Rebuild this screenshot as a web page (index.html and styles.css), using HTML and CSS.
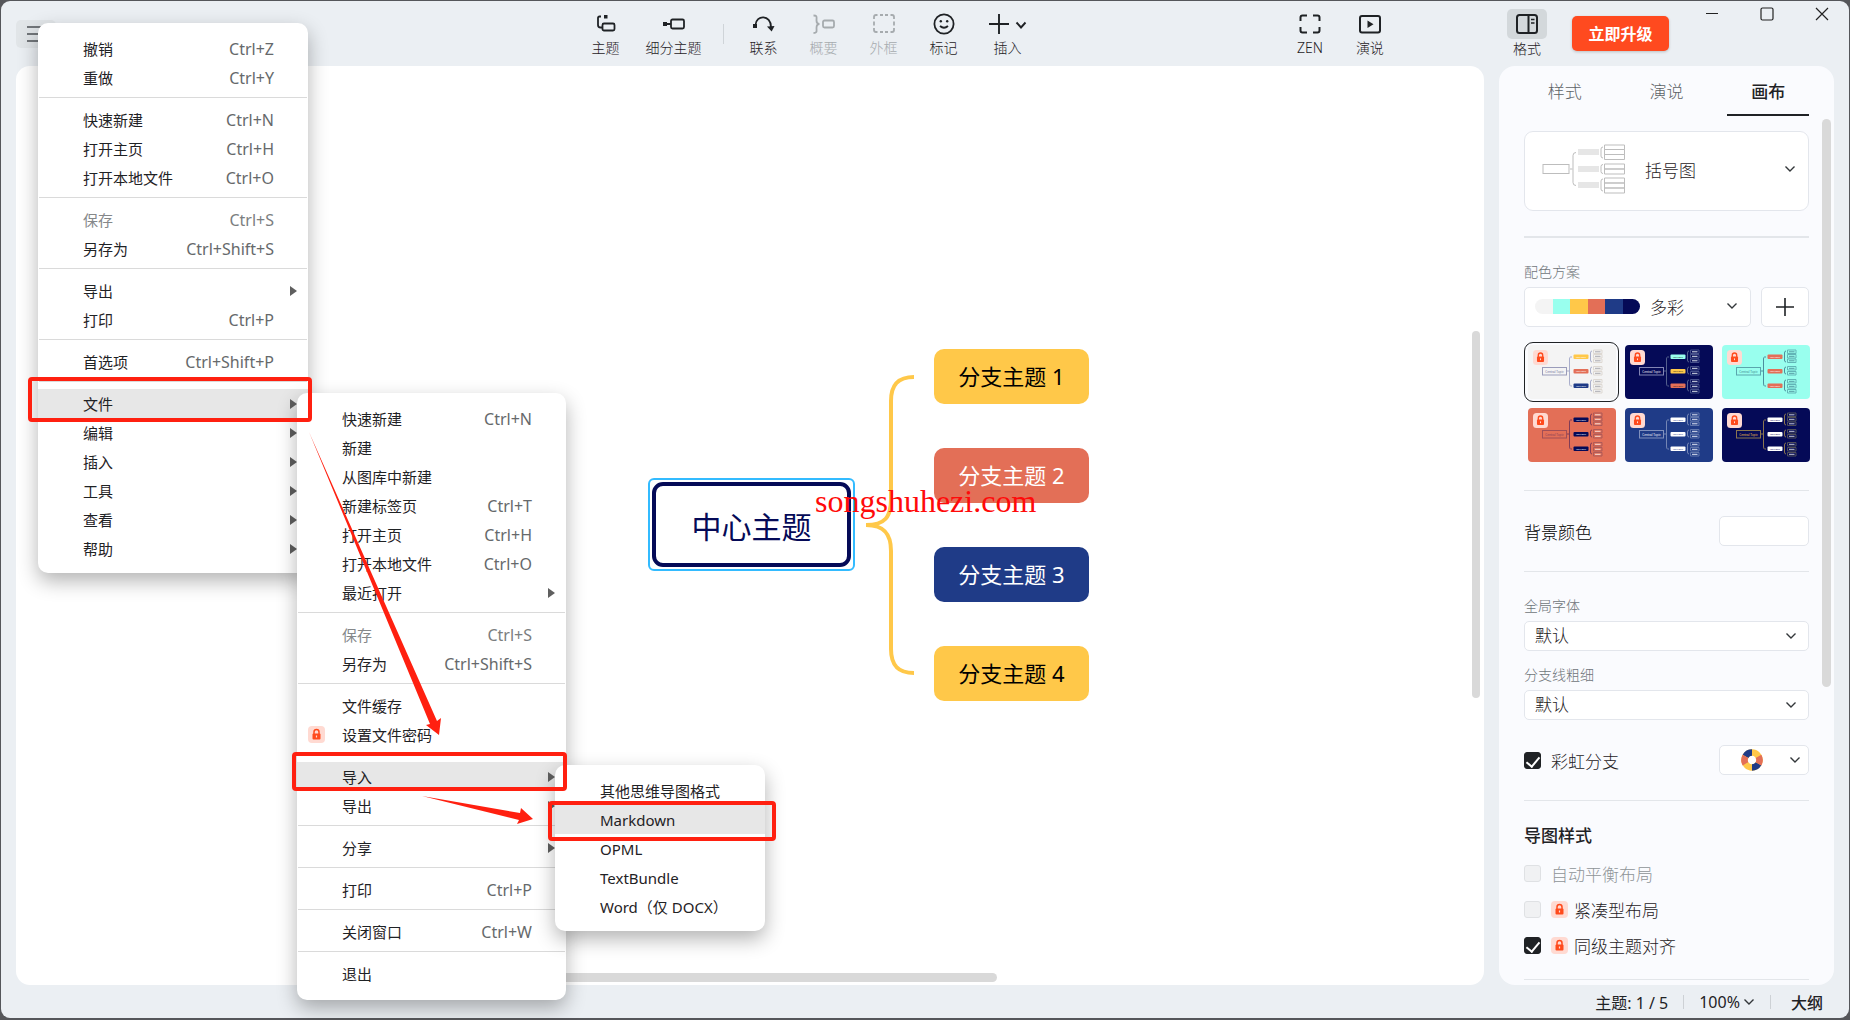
FILE: index.html
```html
<!DOCTYPE html>
<html lang="zh-CN">
<head>
<meta charset="utf-8">
<title>思维导图</title>
<link rel="stylesheet" href="styles.css">
</head>
<body>
<svg class="defs" aria-hidden="true">
  <symbol id="lock" viewBox="0 0 17 17">
    <rect width="17" height="17" rx="4" fill="#ffdad2"/>
    <path d="M6 8V5.900a2.500 2.500 0 0 1 5 0V8" fill="none" stroke="#ff4a1c" stroke-width="1.500"/>
    <rect x="4.500" y="7.500" width="8" height="6" rx="1" fill="#ff4a1c"/>
    <path d="M8.500 9.500v2" stroke="#ffdad2" stroke-width="1.200"/>
  </symbol>
  <symbol id="chevron" viewBox="0 0 12 8">
    <path d="M1.500 1.500 6 6l4.500-4.500" fill="none" stroke="currentColor" stroke-width="1.400"/>
  </symbol>
  <symbol id="tree" viewBox="0 0 88 54">
    <rect class="t-bg" width="88" height="54" rx="4"/>
    <rect class="t-center" x="14.500" y="22.500" width="24" height="7.500"/>
    <path class="t-line" d="M39 26h3M44 12h-1.500q-1 0-1 2v24q0 3 1 3H44M64 6q-1.500 0-1.500 2v7q0 2 1.500 2M64 22q-1.500 0-1.500 2v3q0 2 1.500 2M64 35q-1.500 0-1.500 2v7q0 2 1.500 2"/>
    <rect class="t-m1" x="45.500" y="9.500" width="15" height="4.500" rx="1"/>
    <rect class="t-m2" x="45.500" y="24" width="15" height="4.500" rx="1"/>
    <rect class="t-m3" x="45.500" y="38.500" width="15" height="4.500" rx="1"/>
    <path class="t-sub" d="M65.500 5h8.500v3.500h-8.500zM65.500 9.500h8.500v3.500h-8.500zM65.500 14h8.500v3.500h-8.500zM65.500 21.500h8.500v3.500h-8.500zM65.500 26.500h8.500v3.500h-8.500zM65.500 34.500h8.500v3.500h-8.500zM65.500 39.500h8.500v3.500h-8.500zM65.500 44.500h8.500v3.500h-8.500z"/>
    <path class="t-subtext" d="M67 6.800h5.500M67 11.300h5.500M67 15.800h5.500M67 23.300h5.500M67 28.300h5.500M67 36.300h5.500M67 41.300h5.500M67 46.300h5.500"/>
    <text class="t-ctext" x="26.500" y="27.500">Central Topic</text>
    <text class="t-mtext" x="53" y="12.800">Main Topic</text>
    <text class="t-mtext" x="53" y="27.300">Main Topic</text>
    <text class="t-mtext" x="53" y="41.800">Main Topic</text>
  </symbol>
</svg>

<div class="window">
  <header class="toolbar">
    <button class="hamburger" aria-label="菜单">
      <svg width="18" height="16" viewBox="0 0 18 16"><path d="M0 1h18M0 8h18M0 15h18" stroke="#4d5256" stroke-width="1.600"/></svg>
    </button>
    <span class="space-a"></span>
    <button class="tool">
      <svg width="22" height="22" viewBox="0 0 22 22" fill="none" stroke="#1f2225" stroke-width="1.800"><path d="M6 3.500H4.500q-1.500 0-1.500 1.500v7q0 2.500 2.500 2.500H7"/><rect x="7.500" y="10.500" width="12" height="7" rx="1.500"/><rect x="9" y="2" width="3.500" height="3.500" fill="#1f2225" stroke="none"/></svg>
      主题</button>
    <button class="tool wide">
      <svg width="24" height="22" viewBox="0 0 24 22" fill="none" stroke="#1f2225" stroke-width="1.800"><rect x="9" y="6.500" width="13" height="9" rx="1.500"/><path d="M3 11h6"/><rect x="1" y="9" width="4" height="4" fill="#1f2225" stroke="none"/></svg>
      细分主题</button>
    <span class="tool-sep"></span>
    <button class="tool">
      <svg width="22" height="22" viewBox="0 0 22 22" fill="none" stroke="#1f2225" stroke-width="1.800"><path d="M2.500 12C3 1.500 18 1.500 18 14"/><rect x="0" y="11" width="4" height="4" fill="#1f2225" stroke="none"/><path d="M14 13.500l7.500-.500-2.800 5.500z" fill="#1f2225" stroke="none"/></svg>
      联系</button>
    <button class="tool" disabled>
      <svg width="24" height="22" viewBox="0 0 24 22" fill="none" stroke="#a6abae" stroke-width="1.800"><path d="M1.500 2.500c4 0 3 1.500 3 5 0 2 .5 3.500 3 3.500-2.500 0-3 1.500-3 4 0 3 1 5-3 5"/><rect x="11" y="7.500" width="11" height="7" rx="1.500"/></svg>
      概要</button>
    <button class="tool" disabled>
      <svg width="22" height="22" viewBox="0 0 22 22" fill="none" stroke="#a6abae" stroke-width="1.800"><path d="M1 6V4q0-2 2-2h1.500M17.500 2H19q2 0 2 2v2M21 15v2q0 2-2 2h-1.500M4.500 19H3q-2 0-2-2v-2M7 2h3M12 2h3M7 19h3M12 19h3M1 8.500v4M21 8.500v4"/></svg>
      外框</button>
    <button class="tool">
      <svg width="22" height="22" viewBox="0 0 22 22" fill="none" stroke="#1f2225" stroke-width="1.800"><circle cx="11" cy="11" r="9.600"/><path d="M7 13q4 3.500 8 0"/><circle cx="7.800" cy="8.300" r="1.200" fill="#1f2225" stroke="none"/><circle cx="14.200" cy="8.300" r="1.200" fill="#1f2225" stroke="none"/></svg>
      标记</button>
    <button class="tool insert">
      <svg width="38" height="22" viewBox="0 0 38 22" fill="none" stroke="#1f2225" stroke-width="1.900"><path d="M0 11h20M10 1v20M27.500 9.500l4.500 5 4.500-5"/></svg>
      插入</button>
    <span class="space-b"></span>
    <button class="tool">
      <svg width="22" height="22" viewBox="0 0 22 22" fill="none" stroke="#1f2225" stroke-width="2"><path d="M1.500 8V4.500q0-2 2-2H8M14 2.500h4.500q2 0 2 2V8M20.500 14v3.500q0 2-2 2H14M8 19.500H3.500q-2 0-2-2V14"/></svg>
      ZEN</button>
    <button class="tool">
      <svg width="22" height="22" viewBox="0 0 22 22" fill="none" stroke="#1f2225" stroke-width="2"><rect x="1" y="3" width="20" height="16.500" rx="2"/><path d="M8.500 7.500v7.500l6-3.750z" fill="#1f2225" stroke="none"/></svg>
      演说</button>
    <span class="space-c"></span>
    <button class="tool format">
      <span class="format-icon"><svg width="22" height="22" viewBox="0 0 22 22" fill="none" stroke="#1f2225" stroke-width="2"><rect x="1" y="2" width="20" height="18" rx="2.500"/><path d="M12.500 2v18"/><path d="M15 6.500h3.500M15 10h3.500" stroke-width="1.300"/></svg></span>
      格式</button>
    <button class="upgrade">立即升级</button>
    <div class="controls">
      <button aria-label="最小化"><svg width="14" height="14" viewBox="0 0 14 14" fill="none" stroke="#222"><path d="M1 6.500h12"/></svg></button>
      <button aria-label="最大化"><svg width="14" height="14" viewBox="0 0 14 14" fill="none" stroke="#222" stroke-width="1.200"><rect x="1" y="1" width="12" height="12" rx="1.500"/></svg></button>
      <button aria-label="关闭"><svg width="14" height="14" viewBox="0 0 14 14" fill="none" stroke="#222" stroke-width="1.200"><path d="M1 1l12 12M13 1L1 13"/></svg></button>
    </div>
  </header>

  <div class="main">
    <main class="canvas">
      <svg class="bracket" width="52" height="304" viewBox="0 0 52 304"><path d="M50 4C34 4 27 12 27 28V126C27 144 21 152 2 152C21 152 27 162 27 178V276C27 292 34 300 50 300" fill="none" stroke="#ffc849" stroke-width="4"/></svg>
      <div class="central"><span>中心主题</span></div>
      <div class="branch b1">分支主题 1</div>
      <div class="branch b2">分支主题 2</div>
      <div class="branch b3">分支主题 3</div>
      <div class="branch b4">分支主题 4</div>
      <div class="watermark">songshuhezi.com</div>
      <span class="bar-v"></span>
      <span class="bar-h"></span>
    </main>

    <aside class="sidebar">
      <nav class="tabs">
        <button>样式</button><button>演说</button><button class="on">画布</button>
      </nav>
      <button class="field structure">
        <svg width="84" height="50" viewBox="0 0 84 50" fill="none"><rect x="1" y="20.500" width="26" height="9" stroke="#bdbdbd"/><path d="M28 25h2.500M34 8.500q-3 0-3 3v27q0 3 3 3" stroke="#bdbdbd"/><path d="M36 5h21v6H36zM36 22h21v6H36zM36 38h21v6H36z" fill="#e6e6e6"/><path d="M61 3q-2 0-2 2v7q0 2 2 2M61 20.500q-2 0-2 2v5q0 2 2 2M61 35q-2 0-2 2v8q0 2 2 2" stroke="#bdbdbd"/><path d="M62.500 1h20v4.500h-20zM62.500 5.500h20v5h-20zM62.500 10.500h20v5h-20zM62.500 20h20v5h-20zM62.500 25h20v5h-20zM62.500 34h20v5h-20zM62.500 39h20v5h-20zM62.500 44h20v5h-20z" stroke="#bdbdbd"/></svg>
        <span class="grow">括号图</span>
        <svg class="chev"><use href="#chevron"/></svg>
      </button>
      <hr class="thick">
      <div class="caption">配色方案</div>
      <div class="scheme">
        <button class="field palette">
          <span class="swatch"><i class="c1"></i><i class="c2"></i><i class="c3"></i><i class="c4"></i><i class="c5"></i><i class="c6"></i></span>
          <span class="grow">多彩</span>
          <svg class="chev"><use href="#chevron"/></svg>
        </button>
        <button class="field plus" aria-label="添加"><svg width="18" height="18" viewBox="0 0 18 18"><path d="M0 9h18M9 0v18" stroke="#1f2225" stroke-width="1.600"/></svg></button>
      </div>
      <div class="themes">
        <button class="theme th1 selected" aria-label="配色 1"><svg class="tree"><use href="#tree"/></svg><svg class="lock"><use href="#lock"/></svg></button>
        <button class="theme th2" aria-label="配色 2"><svg class="tree"><use href="#tree"/></svg><svg class="lock"><use href="#lock"/></svg></button>
        <button class="theme th3" aria-label="配色 3"><svg class="tree"><use href="#tree"/></svg><svg class="lock"><use href="#lock"/></svg></button>
        <button class="theme th4" aria-label="配色 4"><svg class="tree"><use href="#tree"/></svg><svg class="lock"><use href="#lock"/></svg></button>
        <button class="theme th5" aria-label="配色 5"><svg class="tree"><use href="#tree"/></svg><svg class="lock"><use href="#lock"/></svg></button>
        <button class="theme th6" aria-label="配色 6"><svg class="tree"><use href="#tree"/></svg><svg class="lock"><use href="#lock"/></svg></button>
      </div>
      <hr>
      <div class="row"><span class="black">背景颜色</span><button class="field small" aria-label="背景颜色"></button></div>
      <hr>
      <label class="caption" for="font">全局字体</label>
      <div class="select"><select id="font" class="field"><option>默认</option></select><svg class="chev"><use href="#chevron"/></svg></div>
      <label class="caption second" for="line">分支线粗细</label>
      <div class="select"><select id="line" class="field"><option>默认</option></select><svg class="chev"><use href="#chevron"/></svg></div>
      <div class="row">
        <label class="check"><input type="checkbox" checked>彩虹分支</label>
        <button class="field small rainbow" aria-label="彩虹配色">
          <svg width="22" height="22" viewBox="0 0 22 22" fill="none" stroke-width="6.500"><circle cx="11" cy="11" r="7.500" stroke="#ffc849"/><path d="M11 3.500A7.500 7.500 0 0 0 4.500 7.250M11 18.500A7.500 7.500 0 0 0 17.500 14.750" stroke="#1f3b87"/><path d="M4.500 7.250A7.500 7.500 0 0 0 4.500 14.750M17.500 14.750A7.500 7.500 0 0 0 17.500 7.250" stroke="#e36f57"/></svg>
          <svg class="chev"><use href="#chevron"/></svg>
        </button>
      </div>
      <hr>
      <h2>导图样式</h2>
      <label class="check line off"><input type="checkbox" disabled>自动平衡布局</label>
      <label class="check line"><input type="checkbox"><svg class="badge"><use href="#lock"/></svg>紧凑型布局</label>
      <label class="check line"><input type="checkbox" checked><svg class="badge"><use href="#lock"/></svg>同级主题对齐</label>
      <hr class="end">
      <span class="bar-side"></span>
    </aside>
  </div>

  <footer class="status">
    <span>主题: 1 / 5</span><i></i><button>100%<svg class="chev"><use href="#chevron"/></svg></button><i></i><button class="outline">大纲</button>
  </footer>
</div>

<ul class="menu menu-main">
  <li><button>撤销<kbd>Ctrl+Z</kbd></button></li>
  <li><button>重做<kbd>Ctrl+Y</kbd></button></li>
  <li class="sep"></li>
  <li><button>快速新建<kbd>Ctrl+N</kbd></button></li>
  <li><button>打开主页<kbd>Ctrl+H</kbd></button></li>
  <li><button>打开本地文件<kbd>Ctrl+O</kbd></button></li>
  <li class="sep"></li>
  <li><button disabled>保存<kbd>Ctrl+S</kbd></button></li>
  <li><button>另存为<kbd>Ctrl+Shift+S</kbd></button></li>
  <li class="sep"></li>
  <li><button class="sub">导出</button></li>
  <li><button>打印<kbd>Ctrl+P</kbd></button></li>
  <li class="sep"></li>
  <li><button>首选项<kbd>Ctrl+Shift+P</kbd></button></li>
  <li class="sep"></li>
  <li><button class="sub hot">文件</button></li>
  <li><button class="sub">编辑</button></li>
  <li><button class="sub">插入</button></li>
  <li><button class="sub">工具</button></li>
  <li><button class="sub">查看</button></li>
  <li><button class="sub">帮助</button></li>
</ul>

<ul class="menu menu-file">
  <li><button>快速新建<kbd>Ctrl+N</kbd></button></li>
  <li><button>新建</button></li>
  <li><button>从图库中新建</button></li>
  <li><button>新建标签页<kbd>Ctrl+T</kbd></button></li>
  <li><button>打开主页<kbd>Ctrl+H</kbd></button></li>
  <li><button>打开本地文件<kbd>Ctrl+O</kbd></button></li>
  <li><button class="sub">最近打开</button></li>
  <li class="sep"></li>
  <li><button disabled>保存<kbd>Ctrl+S</kbd></button></li>
  <li><button>另存为<kbd>Ctrl+Shift+S</kbd></button></li>
  <li class="sep"></li>
  <li><button>文件缓存</button></li>
  <li><button class="locked"><svg class="badge"><use href="#lock"/></svg>设置文件密码</button></li>
  <li class="sep"></li>
  <li><button class="sub hot">导入</button></li>
  <li><button class="sub">导出</button></li>
  <li class="sep"></li>
  <li><button class="sub">分享</button></li>
  <li class="sep"></li>
  <li><button>打印<kbd>Ctrl+P</kbd></button></li>
  <li class="sep"></li>
  <li><button>关闭窗口<kbd>Ctrl+W</kbd></button></li>
  <li class="sep"></li>
  <li><button>退出</button></li>
</ul>

<ul class="menu menu-import">
  <li><button>其他思维导图格式</button></li>
  <li><button class="hot">Markdown</button></li>
  <li><button>OPML</button></li>
  <li><button>TextBundle</button></li>
  <li><button>Word（仅 DOCX）</button></li>
</ul>

<span class="mark mark-file"></span>
<span class="mark mark-import"></span>
<span class="mark mark-markdown"></span>
<svg class="arrows" width="560" height="840" viewBox="0 0 560 840" fill="#ff2010">
  <path d="M309 432L437 721L441 718L439 735L426 725L430 724Z"/>
  <path d="M422 796L520 813L521 808L533 819L517 824L519 820Z"/>
</svg>
</body>
</html>
```
FILE: styles.css
```css
* { box-sizing: border-box; }
html, body { height: 100%; }
body {
  margin: 0;
  padding: 1px 1px 2px;
  background: #55565a;
  color: #1f2225;
  font-family: "Noto Sans", "Noto Sans CJK SC", sans-serif;
  font-size: 17px;
  overflow: hidden;
}
button, select, input { font: inherit; color: inherit; }
button { border: 0; padding: 0; background: none; }
svg { flex: none; }
.defs { position: absolute; width: 0; height: 0; }

.window {
  display: flex;
  flex-direction: column;
  height: 100%;
  background: #ebeff3;
  border-radius: 9px;
  overflow: hidden;
}

/* toolbar */
.toolbar { display: flex; height: 65px; padding-left: 15px; flex: none; }
.hamburger {
  width: 40px;
  height: 28px;
  margin-top: 19px;
  border-radius: 5px;
  background: #e1e5e8;
  display: flex;
  align-items: center;
  justify-content: center;
}
.space-a { flex: 519 0 0; }
.space-b { flex: 238 0 0; }
.space-c { flex: 107 0 0; }
.tool {
  width: 60px;
  padding-top: 12px;
  display: flex;
  flex-direction: column;
  align-items: center;
  gap: 3px;
  font-size: 14px;
  font-weight: 300;
  line-height: 20px;
}
.tool:disabled { color: #a6abae; }
.tool.wide { width: 76px; }
.tool.insert { width: 68px; }
.tool-sep { width: 1px; height: 20px; margin: 23px 10px 0 11px; background: #cfd4d8; }
.tool.format { width: 40px; padding-top: 8px; gap: 0; }
.format-icon {
  display: flex;
  align-items: center;
  justify-content: center;
  width: 40px;
  height: 30px;
  border-radius: 5px;
  background: #d3d8db;
}
.upgrade {
  width: 97px;
  height: 35px;
  margin: 15px 15px 0 25px;
  padding-bottom: 2px;
  border-radius: 5px;
  background: #ff4a1f;
  color: #fff;
  font-size: 16px;
  font-weight: 700;
  box-shadow: 0 1px 3px rgba(0, 0, 0, .2);
}
.controls { display: flex; }
.controls button { width: 55px; height: 26px; display: flex; align-items: center; justify-content: center; }

/* body */
.main { flex: 1; min-height: 0; display: flex; gap: 15px; padding: 0 15px; }
.canvas { position: relative; flex: 1; background: #fff; border-radius: 14px; overflow: hidden; }
.central {
  position: absolute;
  left: 632px;
  top: 412px;
  width: 207px;
  height: 93px;
  padding: 2px;
  border: 2px solid #33bbff;
  border-radius: 6px;
}
.central span {
  display: flex;
  align-items: center;
  justify-content: center;
  height: 100%;
  border: 4px solid #050a57;
  border-radius: 11px;
  color: #050a57;
  font-size: 30px;
}
.branch {
  position: absolute;
  left: 918px;
  width: 155px;
  height: 55px;
  border-radius: 10px;
  font-size: 22px;
  line-height: 55px;
  text-align: center;
  color: #fff;
}
.b1 { top: 283px; background: #ffc849; color: #000; }
.b2 { top: 382px; background: #e36f57; }
.b3 { top: 481px; background: #1f3b87; }
.b4 { top: 580px; background: #ffc849; color: #000; }
.bracket { position: absolute; left: 848px; top: 307px; }
.watermark {
  position: absolute;
  left: 799px;
  top: 417px;
  color: #ff0a0a;
  font: 32px/36px "Liberation Serif", serif;
}
.bar-v, .bar-h, .bar-side { position: absolute; border-radius: 5px; background: #d9d9d9; }
.bar-v { right: 4px; top: 265px; width: 8px; height: 367px; }
.bar-h { left: 520px; bottom: 3px; width: 461px; height: 9px; }

/* sidebar */
.sidebar {
  position: relative;
  width: 335px;
  padding: 0 25px;
  background: #fafbfe;
  border-radius: 16px;
  font-weight: 300;
  overflow: hidden;
}
.bar-side { right: 3px; top: 53px; width: 9px; height: 568px; }
.tabs { display: grid; grid-template-columns: repeat(3, 1fr); gap: 20px; height: 50px; }
.tabs button { color: #5d6367; border-bottom: 2px solid transparent; }
.tabs .on { color: #1f2225; border-color: #1f2225; font-weight: 500; }
.field { border: 1px solid #e3e6ec; border-radius: 5px; background: #fff; }
.chev { width: 12px; height: 8px; color: #33373a; }
.grow { flex: 1; text-align: left; }
.structure {
  display: flex;
  align-items: center;
  gap: 19px;
  width: 100%;
  height: 80px;
  margin-top: 15px;
  padding: 0 12px 4px 17px;
  border-radius: 9px;
}
hr { height: 1px; margin: 25px 0; border: 0; background: #e3e6ea; }
hr.thick { height: 2px; }
hr.end { margin: 16px 0 0; }
.caption { display: block; margin-bottom: 6px; color: #6f757a; font-size: 14px; line-height: 18px; }
.caption.second { margin-top: 15px; }
.scheme { display: flex; gap: 10px; height: 40px; margin-bottom: 15px; }
.palette { flex: 1; display: flex; align-items: center; gap: 10px; padding: 0 12px 2px 10px; }
.swatch { display: flex; width: 105px; height: 15px; border-radius: 8px; overflow: hidden; }
.swatch i { flex: 1; }
.c1 { background: #f4f4f4; }
.c2 { background: #99ffee; }
.c3 { background: #ffc849; }
.c4 { background: #e36f57; }
.c5 { background: #1f3b87; }
.c6 { background: #050a57; }
.plus { width: 48px; display: flex; align-items: center; justify-content: center; }

.themes { display: grid; grid-template-columns: repeat(3, 95px); gap: 3px 2px; }
.theme { position: relative; height: 60px; border: 1px solid transparent; border-radius: 9px; }
.theme.selected { border-color: #1f2225; }
.tree { display: block; width: 88px; height: 54px; margin: auto; }
.lock { position: absolute; left: 8px; top: 7px; width: 15px; height: 15px; }
.th1 { --bg: #f4f4f4; --c: #9a9cba; --ct: #6d6f96; --l: #a9aecb; --m1: #ffc849; --m2: #e36f57; --m3: #1f3b87; --mt: #fff; --s: #ddd8d2; --st: #a9a9b0; }
.th2 { --bg: #050a57; --c: #8285b4; --ct: #fff; --l: #55608e; --m1: #99ffee; --m2: #ffc849; --m3: #e36f57; --mt: #222; --s: #45508a; --st: #dfe6ee; }
.th3 { --bg: #99ffee; --c: #5aa6ad; --ct: #3a7f8a; --l: #4c8f9e; --m1: #e36f57; --m2: #e36f57; --m3: #e36f57; --mt: #fff; --s: #62b5b7; --st: #549aa3; }
.th4 { --bg: #e36f57; --c: #a04e57; --ct: #803c57; --l: #803c57; --m1: #050a57; --m2: #050a57; --m3: #050a57; --mt: #fff; --s: #ad5a58; --st: #f6ded8; }
.th5 { --bg: #1f3b87; --c: #8090bc; --ct: #fff; --l: #7486b5; --m1: #fff; --m2: #fff; --m3: #fff; --mt: #1f3b87; --s: #6076ab; --st: #e5eaf5; }
.th6 { --bg: #050a57; --c: #8b7650; --ct: #ffc849; --l: #8b7650; --m1: #fff; --m2: #fff; --m3: #fff; --mt: #050a57; --s: #4f4e58; --st: #c8cad8; }
.t-bg { fill: var(--bg); }
.t-center { fill: none; stroke: var(--c); }
.t-line { fill: none; stroke: var(--l); stroke-width: 1px; }
.t-m1 { fill: var(--m1); }
.t-m2 { fill: var(--m2); }
.t-m3 { fill: var(--m3); }
.t-sub { fill: none; stroke: var(--s); stroke-width: 1px; }
.t-subtext { stroke: var(--st); stroke-width: 1px; }
.t-ctext, .t-mtext { font-family: "Noto Sans", sans-serif; font-weight: 400; text-anchor: middle; }
.t-ctext { fill: var(--ct); font-size: 3px; }
.t-mtext { fill: var(--mt); font-size: 2px; }

.row { display: flex; align-items: center; justify-content: space-between; height: 30px; margin: 25px 0; }
.black { color: #000; }
.small { width: 90px; height: 30px; }
.rainbow { display: flex; align-items: center; justify-content: flex-end; gap: 26px; padding-right: 7px; }
.select { display: flex; align-items: center; }
.select select { width: 100%; height: 30px; padding: 0 10px; line-height: 26px; appearance: none; }
.select .chev { margin-left: -24px; margin-right: 12px; pointer-events: none; }
.check { display: flex; align-items: center; }
.check.line { height: 36px; }
.check.off { color: #8f9498; }
.check input {
  appearance: none;
  display: flex;
  justify-content: center;
  width: 17px;
  height: 17px;
  margin: 0 10px 0 0;
  border: 1px solid #dfe1e4;
  border-radius: 3px;
  background: #f0f1f3;
}
.check input:checked { border-color: #1f2225; background: #1f2225; }
.check input:checked::after {
  content: "";
  width: 6px;
  height: 11px;
  margin-top: 1px;
  border: solid #fff;
  border-width: 0 2px 2px 0;
  transform: rotate(40deg);
}
.badge { width: 17px; height: 17px; margin-right: 6px; }
h2 { margin: 0 0 9px; font-size: 17px; font-weight: 500; line-height: 20px; }

/* status bar */
.status {
  display: flex;
  align-items: center;
  justify-content: flex-end;
  gap: 15px;
  height: 33px;
  padding-right: 26px;
  flex: none;
  font-size: 16px;
}
.status i { width: 1px; height: 14px; background: #cdd1d5; }
.status button { display: flex; align-items: center; gap: 3px; }
.status .outline { margin-left: 5px; font-weight: 500; }

/* menus */
.menu {
  position: absolute;
  margin: 0;
  padding: 11px 0 10px;
  list-style: none;
  background: #fff;
  border-radius: 10px;
  box-shadow: 0 8px 20px rgba(0, 0, 0, .3);
  font-size: 15px;
}
.menu-main { left: 38px; top: 23px; width: 270px; }
.menu-file { left: 297px; top: 393px; width: 269px; padding-bottom: 12px; }
.menu-import { left: 555px; top: 765px; width: 210px; }
.menu button {
  display: flex;
  align-items: center;
  width: 100%;
  height: 29px;
  padding: 0 34px 0 45px;
}
.menu button:disabled { color: #85888a; }
.menu .hot { background: #e7e7e7; }
.menu .sep { height: 1px; margin: 5px 1px 7px; background: #dadada; }
.menu kbd { margin-left: auto; font: 16px "Noto Sans", sans-serif; color: #66696b; }
.menu button:disabled kbd { color: #7b7e80; }
.menu .sub { padding-right: 11px; }
.menu .sub::after {
  content: "";
  margin-left: auto;
  border-left: 7px solid #5f5f5f;
  border-top: 5px solid transparent;
  border-bottom: 5px solid transparent;
}
.menu .locked { padding-left: 11px; }
.menu .locked .badge { margin-right: 17px; }

/* annotations */
.mark { position: absolute; border: 4px solid #ff2010; border-radius: 4px; }
.mark-file { left: 28px; top: 377px; width: 284px; height: 45px; }
.mark-import { left: 292px; top: 752px; width: 275px; height: 39px; }
.mark-markdown { left: 548px; top: 801px; width: 228px; height: 40px; }
.arrows { position: absolute; left: 0; top: 0; pointer-events: none; }
```
